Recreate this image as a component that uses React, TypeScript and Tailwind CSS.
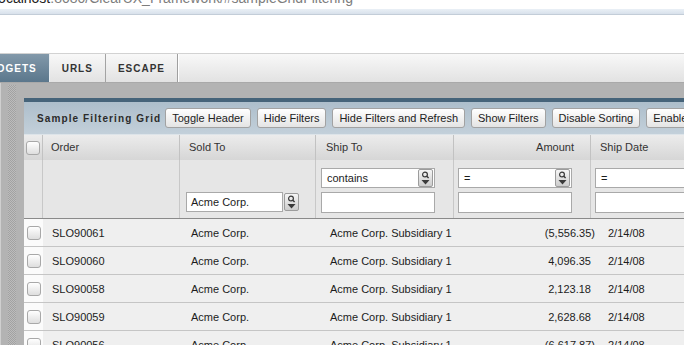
import React from "react";

const cols = "grid grid-cols-[19px_137px_136px_138px_137px_1fr]";

function Checkbox() {
  return (
    <div className="h-[14px] w-[14px] rounded-[3px] border border-[#a8a8a8] bg-linear-to-b from-white to-[#dedede]" />
  );
}

function PickIcon() {
  return (
    <div className="flex h-[18px] w-[15px] shrink-0 items-center justify-center rounded-[2px] border border-[#9c9c9c] bg-linear-to-b from-[#f6f6f6] to-[#cdcdcd]">
      <svg width="11" height="16" viewBox="0 0 11 16">
        <circle cx="5" cy="4.5" r="2.4" fill="none" stroke="#3a3a3a" strokeWidth="1.2" />
        <line x1="6.8" y1="6.3" x2="8.6" y2="8.1" stroke="#3a3a3a" strokeWidth="1.4" />
        <polygon points="1.5,10 9.5,10 5.5,14.5" fill="#3a3a3a" />
      </svg>
    </div>
  );
}

function SelectBox({ value }: { value: string }) {
  return (
    <div className="flex h-[20px] w-[114px] items-center justify-between border border-[#a9a9a9] bg-white pl-[5px] pr-[1px]">
      <span>{value}</span>
      <PickIcon />
    </div>
  );
}

function TextBox() {
  return <div className="h-[21px] w-[114px] border border-[#a9a9a9] bg-white" />;
}

const rows = [
  ["SLO90061", "(5,556.35", true],
  ["SLO90060", "4,096.35", false],
  ["SLO90058", "2,123.18", false],
  ["SLO90059", "2,628.68", false],
  ["SLO90056", "(6,617.87", true],
] as const;

export default function App() {
  return (
    <div className="relative h-[345px] w-[684px] overflow-hidden bg-white font-['Liberation_Sans',Arial,sans-serif] text-[11px] text-[#1c1c1c]">
      {/* address bar, cut off at the top */}
      <div className="h-[9px] overflow-hidden whitespace-nowrap">
        <div className="-mt-[11px] -ml-[5px] text-[14px] leading-[18px] text-[#7d7d7d]">
          <span className="text-[#222]">localhost</span>:8080/ClearUX_Framework/#sampleGridFiltering
        </div>
      </div>
      <div className="h-[6px] border-b border-[#c3cdd8] bg-linear-to-b from-[#eaf0f6] to-[#d8e1eb]" />
      <div className="h-[38px]" />

      {/* tab bar */}
      <div className="flex h-[30px] border-t border-b border-t-[#d2d2d2] border-b-[#a9a9a9] bg-linear-to-b from-[#f8f8f8] to-[#e2e2e2] text-[10px] font-bold tracking-[1px]">
        <div className="-ml-[17px] flex items-center border-r border-[#e8eef2] bg-linear-to-b from-[#8299aa] to-[#5b778c] pr-[12px] text-white">
          WIDGETS
        </div>
        <div className="flex items-center border-r border-[#a3a3a3] px-[12px] text-[#333]">URLS</div>
        <div className="flex items-center border-r border-[#9f9f9f] px-[12px] text-[#333] shadow-[1px_0_0_#fff]">ESCAPE</div>
      </div>

      {/* main area */}
      <div className="flex h-[262px] bg-[#b3b3b3]">
        <div className="flex w-[24px] shrink-0">
          <div className="w-[1px] bg-[#cfcfcf]" />
          <div className="ml-[7px] mt-[2px] w-[8px] bg-[repeating-conic-gradient(#a2a2a2_0_25%,#bcbcbc_0_50%)] bg-[length:2px_2px]" />
        </div>

        <div className="w-[720px] shrink-0 pt-[15px]">
          <div className="border-t-4 border-[#46647a]">
            {/* title bar */}
            <div className="flex h-[32px] items-center whitespace-nowrap bg-linear-to-b from-[#adbecb] to-[#c3d0da] pl-[13px]">
              <span className="mr-[4px] text-[10px] font-bold tracking-[1.1px] text-[#2b2b2b]">Sample Filtering Grid</span>
              <div className="flex gap-[6px]">
                {["Toggle Header", "Hide Filters", "Hide Filters and Refresh", "Show Filters", "Disable Sorting", "Enable Sorting"].map((b) => (
                  <div
                    key={b}
                    className="flex h-[20px] items-center rounded-[3px] border border-[#a2a2a2] bg-linear-to-b from-white to-[#e4e4e4] px-[6px] text-[#222]"
                  >
                    {b}
                  </div>
                ))}
              </div>
            </div>

            {/* header */}
            <div className={`${cols} h-[26px] border-t border-[#dde4e9] bg-linear-to-b from-[#ececec] to-[#d6d6d6] text-[#333]`}>
              <div className="flex items-center justify-center border-r border-[#c2c2c2]">
                <Checkbox />
              </div>
              <div className="flex items-center border-r border-[#c2c2c2] pl-[8px]">Order</div>
              <div className="flex items-center border-r border-[#c2c2c2] pl-[9px]">Sold To</div>
              <div className="flex items-center border-r border-[#c2c2c2] pl-[10px]">Ship To</div>
              <div className="flex items-center justify-end border-r border-[#c2c2c2] pr-[16px]">Amount</div>
              <div className="flex items-center pl-[9px]">Ship Date</div>
            </div>

            {/* filter row */}
            <div className={`${cols} h-[59px] border-b border-[#8a8a8a] bg-[#e6e6e6]`}>
              <div className="border-r border-[#c8c8c8]" />
              <div className="border-r border-[#c8c8c8]" />
              <div className="flex flex-col justify-end border-r border-[#c8c8c8] pb-[6px] pl-[6px]">
                <div className="flex items-center gap-[1px]">
                  <div className="flex h-[20px] w-[97px] items-center border border-[#a9a9a9] bg-white pl-[4px]">Acme Corp.</div>
                  <PickIcon />
                </div>
              </div>
              <div className="flex flex-col justify-end gap-[4px] border-r border-[#c8c8c8] pb-[5px] pl-[5px]">
                <SelectBox value="contains" />
                <TextBox />
              </div>
              <div className="flex flex-col justify-end gap-[4px] border-r border-[#c8c8c8] pb-[5px] pl-[4px]">
                <SelectBox value="=" />
                <TextBox />
              </div>
              <div className="flex flex-col justify-end gap-[4px] pb-[5px] pl-[4px]">
                <SelectBox value="=" />
                <TextBox />
              </div>
            </div>

            {/* data rows */}
            {rows.map(([order, amount, neg]) => (
              <div key={order} className={`${cols} h-[28px] border-b border-[#c5c5c5] bg-[#efefef]`}>
                <div className="flex items-center justify-center bg-[#fbfbfb]">
                  <Checkbox />
                </div>
                <div className="flex items-center pl-[9px] pt-[2px]">{order}</div>
                <div className="flex items-center pl-[11px] pt-[2px]">Acme Corp.</div>
                <div className="flex items-center pl-[14px] pt-[2px]">Acme Corp. Subsidiary 1</div>
                <div className="flex items-center justify-end pt-[2px]">
                  {amount}
                  {neg && <span className="-mr-[4px]">)</span>}
                </div>
                <div className="flex items-center pl-[17px] pt-[2px]">2/14/08</div>
              </div>
            ))}
          </div>
        </div>
      </div>
    </div>
  );
}
